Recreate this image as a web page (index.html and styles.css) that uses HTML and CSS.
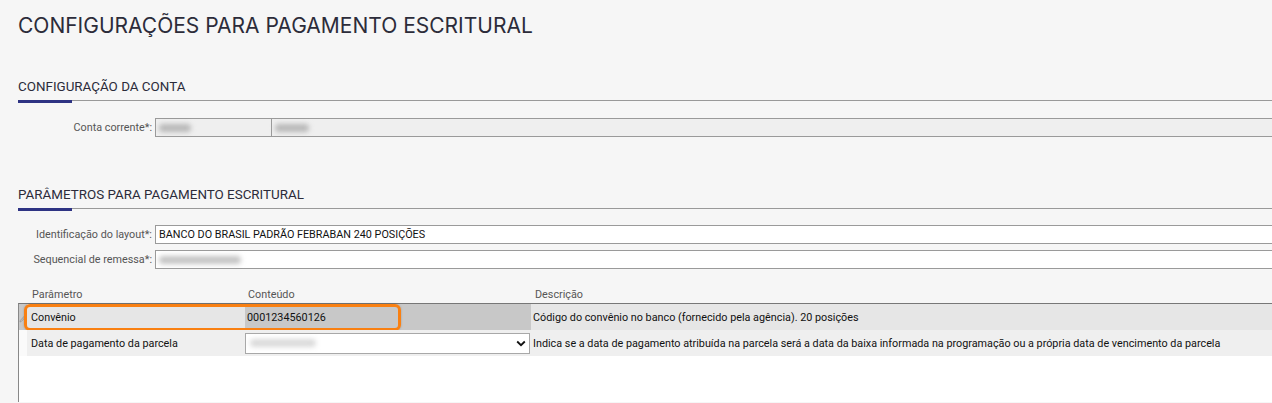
FILE: index.html
```html
<!DOCTYPE html>
<html lang="pt-BR">
<head>
<meta charset="utf-8">
<title>Configurações para pagamento escritural</title>
<link rel="stylesheet" href="styles.css">
</head>
<body>
<div class="page">
  <h1 class="title">CONFIGURAÇÕES PARA PAGAMENTO ESCRITURAL</h1>

  <section class="sec sec-conta">
    <h2 class="sec-title">CONFIGURAÇÃO DA CONTA</h2>
    <div class="rule"><span class="rule-accent"></span><span class="rule-line"></span></div>
    <div class="form-row">
      <label class="lbl">Conta corrente*:</label>
      <div class="field field-ro split">
        <div class="part part-a"><span class="blur blur-a"></span></div>
        <div class="part part-b"><span class="blur blur-b"></span></div>
      </div>
    </div>
  </section>

  <section class="sec sec-param">
    <h2 class="sec-title">PARÂMETROS PARA PAGAMENTO ESCRITURAL</h2>
    <div class="rule"><span class="rule-accent"></span><span class="rule-line"></span></div>
    <div class="form-row">
      <label class="lbl">Identificação do layout*:</label>
      <div class="field field-text">BANCO DO BRASIL PADRÃO FEBRABAN 240 POSIÇÕES</div>
    </div>
    <div class="form-row row-seq">
      <label class="lbl">Sequencial de remessa*:</label>
      <div class="field field-text"><span class="blur blur-seq"></span></div>
    </div>

    <div class="grid">
      <div class="grid-head">
        <div class="hc hc-icon"></div>
        <div class="hc hc-param">Parâmetro</div>
        <div class="hc hc-content">Conteúdo</div>
        <div class="hc hc-desc">Descrição</div>
      </div>
      <div class="grid-body">
        <div class="grow grow-sel">
          <div class="gc gc-icon">
            <svg class="pencil" width="7" height="8" viewBox="0 0 7 8"><path d="M1 7 L1.4 5.4 L5 1.5 L6 2.5 L2.4 6.4 Z" fill="none" stroke="#9a9a9a" stroke-width="0.9"/></svg>
          </div>
          <div class="gc gc-param">Convênio</div>
          <div class="gc gc-content">0001234560126</div>
          <div class="gc gc-desc">Código do convênio no banco (fornecido pela agência). 20 posições</div>
          <div class="highlight"></div>
        </div>
        <div class="grow grow-alt">
          <div class="gc gc-icon"></div>
          <div class="gc gc-param">Data de pagamento da parcela</div>
          <div class="gc gc-content">
            <div class="select">
              <span class="blur blur-sel"></span>
              <svg class="chev" width="10" height="7" viewBox="0 0 10 7"><path d="M1.2 1.5 L5 5.2 L8.8 1.5" fill="none" stroke="#111" stroke-width="1.8"/></svg>
            </div>
          </div>
          <div class="gc gc-desc">Indica se a data de pagamento atribuída na parcela será a data da baixa informada na programação ou a própria data de vencimento da parcela</div>
        </div>
      </div>
    </div>
  </section>
</div>
</body>
</html>
```
FILE: styles.css
```css
* { box-sizing: border-box; }
html, body { margin: 0; padding: 0; }
body {
  background: #f6f6f6;
  font-family: Roboto, "Liberation Sans", Arial, sans-serif;
  color: #222;
  height: 403px;
  overflow: hidden;
}
.page { padding-left: 18px; }

.title {
  margin: 0;
  padding-top: 14px;
  font-family: Inter, "Noto Sans", sans-serif;
  font-weight: 400;
  font-size: 21px;
  line-height: 24px;
  color: #2c2c3a;
  letter-spacing: 0;
}

.sec-title {
  margin: 0;
  font-weight: 400;
  font-size: 13.4px;
  line-height: 16px;
  color: #2b2b3a;
}
.sec-conta { padding-top: 41px; }
.sec-param { padding-top: 50px; }

.rule { display: flex; align-items: flex-start; margin-top: 5px; height: 3px; }
.rule-accent { width: 54px; height: 3px; background: #2e3383; }
.rule-line { flex: 1; height: 1px; background: #999; }

.form-row { display: flex; align-items: center; height: 19px; margin-top: 15px; }
.sec-param .form-row { margin-top: 14px; height: 19px; }
.sec-param .row-seq { margin-top: 6px; }
.lbl {
  width: 134px;
  margin-right: 3px;
  text-align: right;
  font-size: 10.8px;
  color: #555;
  white-space: nowrap;
}
.field {
  flex: 1;
  height: 19px;
  border: 1px solid #9a9a9a;
  border-right: 0;
  font-size: 10.8px;
  display: flex;
  align-items: center;
}
.field-ro { background: #efefef; }
.field-text { background: #fff; padding-left: 3px; color: #111; }
.split .part { height: 100%; display: flex; align-items: center; }
.part-a { width: 116px; border-right: 1px solid #9a9a9a; padding-left: 3px; }
.part-b { flex: 1; padding-left: 3px; }

.blur {
  display: inline-block;
  height: 8px;
  background: #b8b8b8;
  border-radius: 4px;
  filter: blur(2.5px);
}
.blur-a { width: 32px; }
.blur-b { width: 34px; }
.blur-seq { width: 82px; background: #c4c4c4; }
.blur-sel { width: 66px; background: #dadada; margin-left: 4px; }

.grid { margin-top: 17px; }
.grid-head, .grow {
  display: grid;
  grid-template-columns: 8px 218px 286px 1fr;
}
.grid-head { height: 17px; padding-left: 1px; font-size: 10.8px; color: #555; align-items: center; }
.hc-param { padding-left: 5px; }
.hc-content { padding-left: 3px; }
.hc-desc { padding-left: 4px; }

.grid-body {
  border-left: 1px solid #888;
  border-top: 1px solid #777;
  background: #fff;
  height: 99px;
}
.grow { position: relative; height: 26px; font-size: 10.8px; color: #111; }
.gc { display: flex; align-items: center; white-space: nowrap; overflow: hidden; }
.gc-param { padding-left: 4px; }
.gc-content { padding-left: 2px; }
.gc-desc { padding-left: 2px; }

.grow-sel .gc-icon { background: #c8c8c8; }
.grow-sel .gc-param { background: #e6e6e6; }
.grow-sel .gc-content { background: #c8c8c8; }
.grow-sel .gc-desc { background: #e6e6e6; }

.grow-alt { height: 26px; }
.grow-alt .gc-icon { background: #fafafa; }
.grow-alt .gc-param { background: #efefef; }
.grow-alt .gc-content { background: #efefef; padding: 2px 1px 2px 0; }
.grow-alt .gc-desc { background: #efefef; }

.pencil { margin-left: 0; margin-top: 4px; }

.select {
  width: 286px;
  height: 21px;
  border: 1px solid #a8a8a8;
  background: #fff;
  display: flex;
  align-items: center;
  justify-content: space-between;
  padding-right: 3px;
}
.chev { display: block; }

.highlight {
  position: absolute;
  left: 5px;
  top: 0;
  width: 377px;
  height: 27px;
  border: 3px solid #f98012;
  border-radius: 6px;
  box-shadow: 0 0 2px rgba(0,0,0,0.25);
  pointer-events: none;
}
```
